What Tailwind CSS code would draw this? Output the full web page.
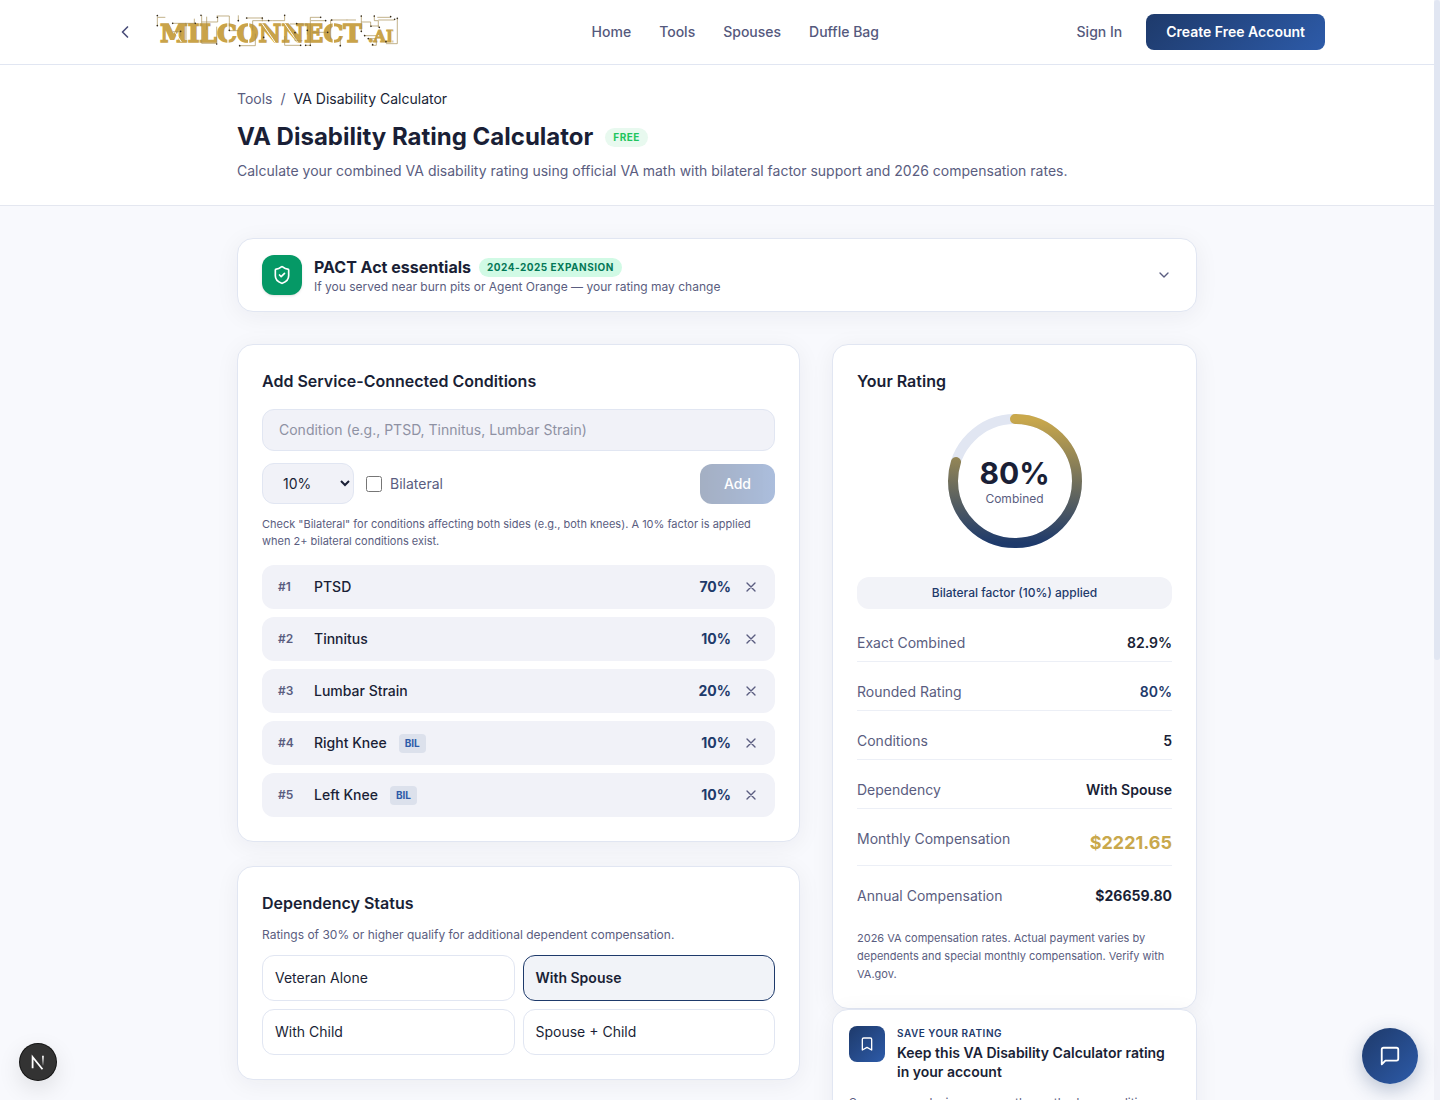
<!DOCTYPE html>
<html lang="en">

<head>
  <meta charset="UTF-8" />
  <meta name="viewport" content="width=device-width, initial-scale=1.0" />
  <title>VA Disability Rating Calculator | MilConnect.AI</title>
  <script src="https://cdn.jsdelivr.net/npm/@tailwindcss/browser@4"></script>
</head>

<body class="font-[Inter,sans-serif] text-sm text-[#1a1f36] bg-[#f8f9fd]">
  <div class="h-screen overflow-hidden pr-1.5">

    <header class="h-[65px] bg-white border-b border-[#e1e6f2]">
      <div class="max-w-7xl mx-auto px-8 h-full flex items-center justify-between">
        <div class="flex items-center gap-3">
          <button aria-label="Go back" class="size-8 flex items-center justify-center text-[#4a4e7a]">
            <svg class="size-5" viewBox="0 0 24 24" fill="none" stroke="currentColor" stroke-width="2" stroke-linecap="round" stroke-linejoin="round"><path d="m15 18-6-6 6-6" /></svg>
          </button>
          <a href="#" aria-label="MilConnect.AI">
            <svg class="overflow-visible" width="241" height="36" viewBox="-2 0 241 36">
              <g fill="#c9a349" stroke="#c9a349" font-family="DejaVu Serif, serif" font-weight="700">
                <text x="5" y="28" font-size="25" stroke-width="1.4">MILCONNECT</text>
                <text x="213" y="28" font-size="16" stroke-width="1">.AI</text>
              </g>
              <!-- circuit traces -->
              <g transform="scale(.3333) translate(-165 -42)" fill="none">
                <path stroke="#fff" stroke-width="4" d="M384 66v66M446 66v66M700 66v66" />
                <path stroke="#fff" stroke-width="3" d="M208 70l36 56M486 70l40 58M554 70l40 58M876 92v38" />
                <path stroke="#a58c50" stroke-width="2" d="M172 78V52h24M218 70h40v48M218 95h24v14M256 70h30M283 56v14M305 46v84h45v-50M305 66h48V50M320 50v40M350 48h38v44h28M415 46v18M440 54h47v10M458 92V62h60M518 62h36V46M419 137h47v-36M554 108v28h48M570 72h52v32M585 98v24h22M617 136h14v-84h30M633 62h44M637 97h46M692 118V60h50M721 138v-30M740 60h28M784 48v46M784 66h28v12h25M823 48v14h12v20M832 52h40M835 60h48M892 55v76h-34M793 107h36M803 116h26v20h-14" />
                <path stroke="#33291a" stroke-width="5" stroke-linecap="round" d="M172 47h0M172 77h0M218 70h0M242 94h0M286 70h0M303 46h0M352 52h0M350 132h0M388 91h0M415 62h0M440 54h0M487 54h0M506 62h0M554 46h0M419 137h0M491 112h0M590 71h0M602 136h0M585 98h0M622 91h0M617 136h0M631 136h0M662 52h0M677 62h0M683 97h0M695 60h0M721 137h0M784 48h0M784 94h0M813 79h0M823 48h0M838 82h0M872 50h0M884 58h0M892 55h0M794 107h0M805 116h0M818 134h0M858 125h0" />
              </g>
            </svg>
          </a>
        </div>
        <nav class="flex gap-7 font-medium text-[#55597d]">
          <a href="#">Home</a>
          <a href="#">Tools</a>
          <a href="#">Spouses</a>
          <a href="#">Duffle Bag</a>
        </nav>
        <div class="flex items-center gap-6">
          <a href="#" class="font-medium text-[#55597d]">Sign In</a>
          <a href="#" class="h-9 px-5 flex items-center rounded-lg font-semibold text-white bg-linear-135 from-[#1e3a6b] to-[#2d5ba9]">Create Free Account</a>
        </div>
      </div>
    </header>

    <section class="bg-white border-b border-[#e4e7f0]">
      <div class="max-w-[960px] mx-auto py-6">
        <nav aria-label="Breadcrumb" class="flex gap-2 text-[#5a5d80]">
          <a href="#">Tools</a>
          <span>/</span>
          <span class="text-[#1a1f36]">VA Disability Calculator</span>
        </nav>
        <div class="mt-3 flex items-center gap-3">
          <h1 class="text-2xl leading-8 font-bold">VA Disability Rating Calculator</h1>
          <span class="px-2 text-[10px] leading-[19px] font-bold tracking-wider text-[#22c55e] bg-[#e8f9ef] rounded-full">FREE</span>
        </div>
        <p class="mt-2 text-[#5a5d80]">Calculate your combined VA disability rating using official VA math with bilateral factor support and 2026 compensation rates.</p>
      </div>
    </section>

    <main class="max-w-[960px] mx-auto pt-8">

      <button class="w-full px-6 py-4 flex items-center gap-3 text-left bg-white border border-[#e1e6f2] rounded-2xl shadow-[0_4px_24px_rgba(26,31,54,0.06)]">
        <span class="size-10 flex items-center justify-center rounded-xl text-white bg-[#059966] shadow-sm">
          <svg class="size-5" viewBox="0 0 24 24" fill="none" stroke="currentColor" stroke-width="2" stroke-linecap="round" stroke-linejoin="round"><path d="M20 13c0 5-3.500 7.500-7.660 8.950a1 1 0 0 1-.67-.01C7.500 20.500 4 18 4 13V6a1 1 0 0 1 1-1c2 0 4.500-1.200 6.240-2.720a1.170 1.170 0 0 1 1.520 0C14.510 3.810 17 5 19 5a1 1 0 0 1 1 1z" /><path d="m9 12 2 2 4-4" /></svg>
        </span>
        <span class="flex-1">
          <span class="flex items-center gap-2">
            <span class="text-base leading-6 font-bold">PACT Act essentials</span>
            <span class="px-2 text-[10px] leading-[19px] font-bold tracking-wider text-[#047857] bg-[#d1fae5] rounded-full">2024-2025 EXPANSION</span>
          </span>
          <span class="block text-xs text-[#5a5d80]">If you served near burn pits or Agent Orange — your rating may change</span>
        </span>
        <svg class="size-4 text-[#5a5d80]" viewBox="0 0 24 24" fill="none" stroke="currentColor" stroke-width="2" stroke-linecap="round" stroke-linejoin="round"><path d="m6 9 6 6 6-6" /></svg>
      </button>

      <div class="mt-8 grid grid-cols-[1fr_365px] gap-8 items-start">

        <div class="space-y-6">
          <section class="p-6 bg-white border border-[#e1e6f2] rounded-2xl shadow-[0_4px_24px_rgba(26,31,54,0.06)]">
            <h2 class="text-base leading-6 font-semibold">Add Service-Connected Conditions</h2>
            <form>
              <input type="text" aria-label="Condition" placeholder="Condition (e.g., PTSD, Tinnitus, Lumbar Strain)" class="mt-4 block w-full h-[42px] px-4 pb-px bg-[#f1f2f8] border border-[#e1e6f2] rounded-xl placeholder:text-[#8e91a3]" />
              <div class="mt-3 flex items-center gap-3">
                <select aria-label="Rating" class="w-[92px] h-[41px] px-4 bg-[#f1f2f8] border border-[#e1e6f2] rounded-xl">
                  <option>10%</option>
                  <option>20%</option>
                  <option>30%</option>
                </select>
                <label class="flex items-center gap-2 text-[#5a5d80]">
                  <input type="checkbox" class="size-4" />
                  Bilateral
                </label>
                <button type="button" disabled class="ml-auto h-10 px-6 rounded-xl font-medium text-white bg-linear-90 from-[#1e3a6b] to-[#2d5ba9] opacity-40">Add</button>
              </div>
            </form>
            <p class="mt-3 text-[11px] leading-[17px] text-[#5a5d80]">Check "Bilateral" for conditions affecting both sides (e.g., both knees). A 10% factor is applied when 2+ bilateral conditions exist.</p>
            <ul id="conditions" class="mt-[15px] space-y-2"></ul>
          </section>

          <section class="p-6 bg-white border border-[#e1e6f2] rounded-2xl shadow-[0_4px_24px_rgba(26,31,54,0.06)]">
            <h2 class="text-base leading-6 font-semibold">Dependency Status</h2>
            <p class="mt-3 text-xs text-[#5a5d80]">Ratings of 30% or higher qualify for additional dependent compensation.</p>
            <div class="mt-3 grid grid-cols-2 gap-2">
              <button class="h-[46px] px-3 text-left bg-white border border-[#e1e6f2] rounded-xl">Veteran Alone</button>
              <button class="h-[46px] px-3 text-left font-semibold bg-[#f1f3f8] border border-[#1e3a6b] rounded-xl">With Spouse</button>
              <button class="h-[46px] px-3 text-left bg-white border border-[#e1e6f2] rounded-xl">With Child</button>
              <button class="h-[46px] px-3 text-left bg-white border border-[#e1e6f2] rounded-xl">Spouse + Child</button>
            </div>
          </section>
        </div>

        <aside>
          <section class="p-6 bg-white border border-[#e1e6f2] rounded-2xl shadow-[0_4px_24px_rgba(26,31,54,0.06)]">
            <h2 class="text-base leading-6 font-semibold">Your Rating</h2>
            <div class="mt-4 grid place-items-center">
              <svg class="col-start-1 row-start-1 size-36 -rotate-90" viewBox="0 0 144 144" fill="none" stroke-width="10">
                <defs>
                  <linearGradient id="ring" x1="1" y1="0" x2="0" y2="0">
                    <stop offset="0" stop-color="#c9a84c" />
                    <stop offset="1" stop-color="#1e3a6b" />
                  </linearGradient>
                </defs>
                <circle cx="72" cy="72" r="62" stroke="#e1e6f2" />
                <circle cx="72" cy="72" r="62" stroke="url(#ring)" stroke-linecap="round" pathLength="100" stroke-dasharray="80 100" />
              </svg>
              <div class="col-start-1 row-start-1 text-center">
                <div class="text-3xl leading-9 font-bold">80%</div>
                <div class="text-xs text-[#5a5d80]">Combined</div>
              </div>
            </div>
            <p class="mt-6 text-xs leading-8 font-medium text-center text-[#1e3a6b] bg-[#f2f3f8] rounded-xl">Bilateral factor (10%) applied</p>
            <dl class="mt-4 space-y-3">
              <div class="flex justify-between py-2 border-b border-[#eceff6]">
                <dt class="text-[#5a5d80]">Exact Combined</dt>
                <dd class="font-semibold">82.9%</dd>
              </div>
              <div class="flex justify-between py-2 border-b border-[#eceff6]">
                <dt class="text-[#5a5d80]">Rounded Rating</dt>
                <dd class="font-semibold text-[#1e3a6b]">80%</dd>
              </div>
              <div class="flex justify-between py-2 border-b border-[#eceff6]">
                <dt class="text-[#5a5d80]">Conditions</dt>
                <dd class="font-semibold">5</dd>
              </div>
              <div class="flex justify-between py-2 border-b border-[#eceff6]">
                <dt class="text-[#5a5d80]">Dependency</dt>
                <dd class="font-semibold">With Spouse</dd>
              </div>
              <div class="flex justify-between py-2 border-b border-[#eceff6]">
                <dt class="text-[#5a5d80]">Monthly Compensation</dt>
                <dd class="text-lg leading-7 font-bold text-[#c9a84c]">$2221.65</dd>
              </div>
              <div class="flex justify-between pt-2">
                <dt class="text-[#5a5d80]">Annual Compensation</dt>
                <dd class="font-bold">$26659.80</dd>
              </div>
            </dl>
            <p class="mt-[23px] pb-px text-[11px] leading-[18px] text-[#5a5d80]">2026 VA compensation rates. Actual payment varies by dependents and special monthly compensation. Verify with VA.gov.</p>
          </section>

          <section class="p-4 bg-white border border-[#e1e6f2] rounded-2xl shadow-[0_4px_24px_rgba(26,31,54,0.06)]">
            <div class="flex gap-3">
              <span class="size-9 shrink-0 flex items-center justify-center rounded-lg text-white bg-linear-135 from-[#1e3a6b] to-[#2d5ba9]">
                <svg class="size-4" viewBox="0 0 24 24" fill="none" stroke="currentColor" stroke-width="2" stroke-linecap="round" stroke-linejoin="round"><path d="m19 21-7-4-7 4V5a2 2 0 0 1 2-2h10a2 2 0 0 1 2 2v16z" /></svg>
              </span>
              <div>
                <p class="text-[10px] leading-[14px] font-semibold tracking-wider text-[#1e3a6b]">SAVE YOUR RATING</p>
                <h3 class="mt-[3px] text-sm leading-[19px] font-semibold">Keep this VA Disability Calculator rating in your account</h3>
              </div>
            </div>
            <p class="mt-3 text-xs leading-5 text-[#5a5d80]">Save your analysis, compare the method as conditions change.</p>
          </section>
        </aside>
      </div>
    </main>
  </div>

  <!-- page scroll indicator -->
  <div aria-hidden="true" class="fixed top-0 right-0 h-screen w-1.5 bg-[#f1f2f8]">
    <div class="h-3/5 bg-[#e1e6f2] rounded-full"></div>
  </div>

  <button aria-label="Developer tools" class="fixed left-5 bottom-5 size-9 flex items-center justify-center rounded-full bg-[#333] ring-1 ring-[#111] shadow-[0_8px_24px_rgba(0,0,0,0.12)]">
    <svg class="size-9" viewBox="0 0 40 40" fill="none" stroke-width="2">
      <defs>
        <linearGradient id="nleg" x1="0" y1="13" x2="0" y2="25" gradientUnits="userSpaceOnUse">
          <stop offset="0" stop-color="#fff" />
          <stop offset="1" stop-color="#fff" stop-opacity="0" />
        </linearGradient>
      </defs>
      <path stroke="#fff" d="M14 27V14.500L25 28" />
      <path stroke="url(#nleg)" d="M25.500 13v11" />
    </svg>
  </button>

  <button aria-label="Open chat" class="fixed right-[22px] bottom-4 size-14 flex items-center justify-center rounded-full text-white bg-linear-135 from-[#1e3a6b] to-[#2d5ba9] shadow-[0_6px_20px_rgba(30,58,107,0.3)]">
    <svg class="size-[22px]" viewBox="0 0 24 24" fill="none" stroke="currentColor" stroke-width="2" stroke-linecap="round" stroke-linejoin="round"><path d="M21 15a2 2 0 0 1-2 2H7l-4 4V5a2 2 0 0 1 2-2h14a2 2 0 0 1 2 2z" /></svg>
  </button>

  <script>
    const conditions = [
      { name: 'PTSD', rating: 70 },
      { name: 'Tinnitus', rating: 10 },
      { name: 'Lumbar Strain', rating: 20 },
      { name: 'Right Knee', rating: 10, bilateral: true },
      { name: 'Left Knee', rating: 10, bilateral: true },
    ];

    const badge = '<span class="px-1.5 text-[10px] leading-[19px] font-bold text-[#2d5ba9] bg-[#dce1ec] rounded">BIL</span>';

    document.getElementById('conditions').innerHTML = conditions.map((c, i) => `
      <li class="h-11 px-4 flex items-center gap-3 bg-[#f1f2f8] rounded-xl">
        <span class="w-6 text-xs font-semibold text-[#5a5d80]">#${i + 1}</span>
        <span class="font-medium">${c.name}</span>
        ${c.bilateral ? badge : ''}
        <span class="ml-auto font-bold text-[#1e3a6b]">${c.rating}%</span>
        <button aria-label="Remove ${c.name}" class="text-[#5a5d80]">
          <svg class="size-4" viewBox="0 0 24 24" fill="none" stroke="currentColor" stroke-width="2" stroke-linecap="round" stroke-linejoin="round"><path d="M18 6 6 18M6 6l12 12" /></svg>
        </button>
      </li>`).join('');
  </script>
</body>

</html>
